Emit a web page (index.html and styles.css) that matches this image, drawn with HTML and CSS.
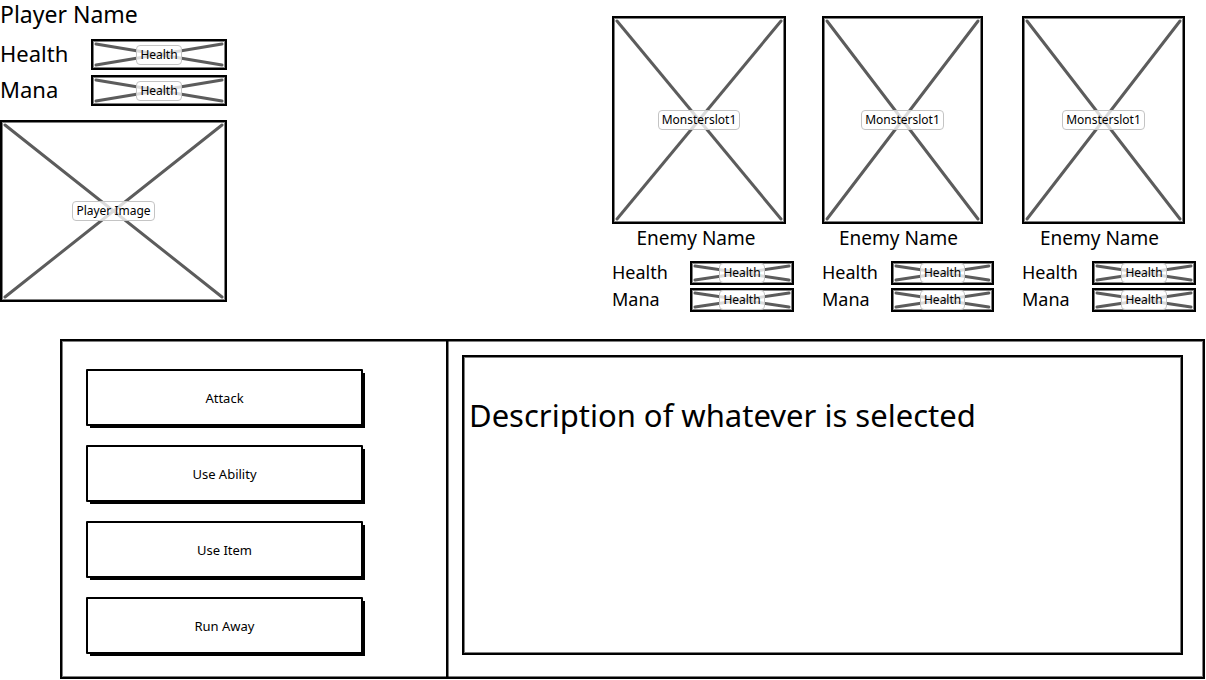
FILE: index.html
```html
<!DOCTYPE html>
<html lang="en">
<head>
<meta charset="utf-8">
<title>Battle screen</title>
<link rel="stylesheet" href="styles.css">
</head>
<body>
<main class="screen">
  <div class="arena">
    <section class="player">
      <h1 class="player-name">Player Name</h1>
      <div class="stats">
        <span class="stat-label">Health</span>
        <div class="slot bar"><svg class="cross"><line x1="0" y1="0" x2="100%" y2="100%"/><line x1="100%" y1="0" x2="0" y2="100%"/></svg><span class="chip">Health</span></div>
        <span class="stat-label">Mana</span>
        <div class="slot bar"><svg class="cross"><line x1="0" y1="0" x2="100%" y2="100%"/><line x1="100%" y1="0" x2="0" y2="100%"/></svg><span class="chip">Health</span></div>
      </div>
      <div class="slot portrait"><svg class="cross"><line x1="0" y1="0" x2="100%" y2="100%"/><line x1="100%" y1="0" x2="0" y2="100%"/></svg><span class="chip">Player Image</span></div>
    </section>

    <div class="enemies">
      <section class="enemy enemy-wide">
        <div class="slot monster"><svg class="cross"><line x1="0" y1="0" x2="100%" y2="100%"/><line x1="100%" y1="0" x2="0" y2="100%"/></svg><span class="chip">Monsterslot1</span></div>
        <h2 class="enemy-name">Enemy Name</h2>
        <div class="stats">
          <span class="stat-label">Health</span>
          <div class="slot bar"><svg class="cross"><line x1="0" y1="0" x2="100%" y2="100%"/><line x1="100%" y1="0" x2="0" y2="100%"/></svg><span class="chip">Health</span></div>
          <span class="stat-label">Mana</span>
          <div class="slot bar"><svg class="cross"><line x1="0" y1="0" x2="100%" y2="100%"/><line x1="100%" y1="0" x2="0" y2="100%"/></svg><span class="chip">Health</span></div>
        </div>
      </section>
      <section class="enemy">
        <div class="slot monster"><svg class="cross"><line x1="0" y1="0" x2="100%" y2="100%"/><line x1="100%" y1="0" x2="0" y2="100%"/></svg><span class="chip">Monsterslot1</span></div>
        <h2 class="enemy-name">Enemy Name</h2>
        <div class="stats">
          <span class="stat-label">Health</span>
          <div class="slot bar"><svg class="cross"><line x1="0" y1="0" x2="100%" y2="100%"/><line x1="100%" y1="0" x2="0" y2="100%"/></svg><span class="chip">Health</span></div>
          <span class="stat-label">Mana</span>
          <div class="slot bar"><svg class="cross"><line x1="0" y1="0" x2="100%" y2="100%"/><line x1="100%" y1="0" x2="0" y2="100%"/></svg><span class="chip">Health</span></div>
        </div>
      </section>
      <section class="enemy">
        <div class="slot monster"><svg class="cross"><line x1="0" y1="0" x2="100%" y2="100%"/><line x1="100%" y1="0" x2="0" y2="100%"/></svg><span class="chip">Monsterslot1</span></div>
        <h2 class="enemy-name">Enemy Name</h2>
        <div class="stats">
          <span class="stat-label">Health</span>
          <div class="slot bar"><svg class="cross"><line x1="0" y1="0" x2="100%" y2="100%"/><line x1="100%" y1="0" x2="0" y2="100%"/></svg><span class="chip">Health</span></div>
          <span class="stat-label">Mana</span>
          <div class="slot bar"><svg class="cross"><line x1="0" y1="0" x2="100%" y2="100%"/><line x1="100%" y1="0" x2="0" y2="100%"/></svg><span class="chip">Health</span></div>
        </div>
      </section>
    </div>
  </div>

  <div class="console">
    <nav class="actions" aria-label="Actions">
      <button class="action" type="button">Attack</button>
      <button class="action" type="button">Use Ability</button>
      <button class="action" type="button">Use Item</button>
      <button class="action" type="button">Run Away</button>
    </nav>
    <section class="details">
      <p class="description">Description of whatever is selected</p>
    </section>
  </div>
</main>
</body>
</html>
```
FILE: styles.css
```css
* {
  box-sizing: border-box;
}

body {
  margin: 0;
  background: #fff;
  color: #000;
  font-family: "Noto Sans", "Open Sans", sans-serif;
}

h1,
h2,
p {
  margin: 0;
  font-weight: 400;
}

.screen {
  display: flex;
  flex-direction: column;
  min-height: 100vh;
}

.arena {
  display: grid;
  grid-template-columns: 227fr 584fr;
  column-gap: 385px;
  padding-right: 10px;
}

/* Crossed image placeholder */
.slot {
  position: relative;
  display: flex;
  align-items: center;
  justify-content: center;
  border: 2px solid #000;
  box-shadow: inset 0 0 0 1px rgba(0, 0, 0, 0.5);
}

.cross {
  position: absolute;
  top: 3px;
  left: 3px;
  width: calc(100% - 6px);
  height: calc(100% - 6px);
  overflow: visible;
  stroke: #5c5c5c;
  stroke-width: 3px;
  stroke-linecap: round;
}

.chip {
  position: relative;
  flex: none;
  padding: 0 3px;
  border: 1px solid #c4c4c4;
  border-radius: 4px;
  background: rgba(255, 255, 255, 0.78);
  font-size: 12px;
  line-height: 18px;
}

.stats {
  display: grid;
  align-items: center;
}

.stat-label {
  padding-bottom: 3px;
}

/* Player */
.player-name {
  font-size: 23px;
  line-height: 28px;
}

.player .stats {
  grid-template-columns: 91fr 136fr;
  grid-auto-rows: 31px;
  row-gap: 5px;
  margin: 11px 0 14px;
  font-size: 22px;
  line-height: 28px;
}

.bar {
  height: 100%;
}

.portrait {
  height: 182px;
}

/* Enemies */
.enemies {
  display: grid;
  grid-template-columns: 182fr 172fr 174fr;
  column-gap: 28px;
  padding-top: 16px;
}

.monster {
  height: 208px;
  margin-right: 11px;
}

.enemy-wide .monster {
  margin-right: 8px;
}

.enemy-name {
  padding-right: 19px;
  font-size: 19px;
  line-height: 28px;
  text-align: center;
}

.enemy-wide .enemy-name {
  padding-right: 14px;
}

.enemy .stats {
  grid-template-columns: 70fr 104fr;
  grid-auto-rows: 24px;
  row-gap: 3px;
  margin-top: 9px;
  font-size: 18px;
  line-height: 24px;
}

.enemy-wide .stats {
  grid-template-columns: 78fr 104fr;
}

/* Command console */
.console {
  flex: 1;
  display: grid;
  grid-template-columns: 384fr 757fr;
  margin: 27px 1px 1px 60px;
  border: 2px solid #000;
  box-shadow: inset 0 0 0 1px rgba(0, 0, 0, 0.5);
}

.actions {
  display: flex;
  flex-direction: column;
  gap: 19px;
  padding: 28px 83px 23px 24px;
}

.action {
  height: 57px;
  border: 2px solid #000;
  border-radius: 1px;
  background: #fff;
  box-shadow: 3px 3px 0 -1px #000;
  color: #000;
  font-family: inherit;
  font-size: 13px;
}

.details {
  display: flex;
  padding: 14px 20px 22px 14px;
  border-left: 2px solid #000;
  box-shadow: inset 1px 0 0 rgba(0, 0, 0, 0.5);
}

.description {
  flex: 1;
  padding: 36px 5px;
  border: 2px solid #000;
  box-shadow: inset 0 0 0 1px rgba(0, 0, 0, 0.5);
  font-size: 31px;
  line-height: 44px;
}
```
